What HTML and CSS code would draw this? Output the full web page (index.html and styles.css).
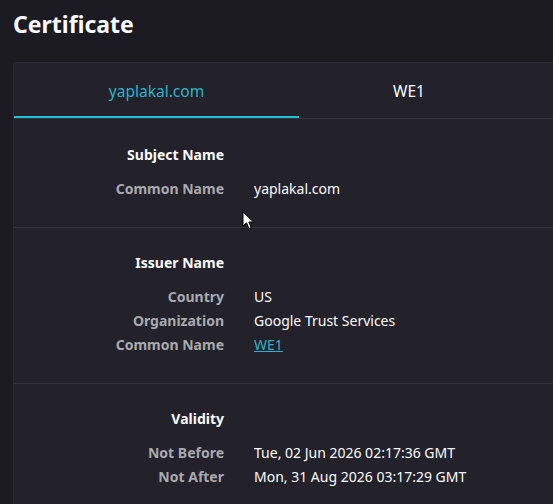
FILE: index.html
```html
<!DOCTYPE html>
<html>
<head>
<meta charset="utf-8">
<link rel="stylesheet" href="styles.css">
</head>
<body>
<h1 class="title">Certificate</h1>
<div class="card">
  <div class="tabs">
    <div class="tab tab-first active">yaplakal.com</div>
    <div class="tab tab-second">WE1</div>
  </div>
  <section class="section">
    <div class="heading">Subject Name</div>
    <div class="rows">
      <div class="label">Common Name</div><div class="value">yaplakal.com</div>
    </div>
  </section>
  <section class="section">
    <div class="heading">Issuer Name</div>
    <div class="rows">
      <div class="label">Country</div><div class="value">US</div>
      <div class="label">Organization</div><div class="value">Google Trust Services</div>
      <div class="label">Common Name</div><div class="value"><a class="link" href="#">WE1</a></div>
    </div>
  </section>
  <section class="section">
    <div class="heading">Validity</div>
    <div class="rows">
      <div class="label">Not Before</div><div class="value">Tue, 02 Jun 2026 02:17:36 GMT</div>
      <div class="label">Not After</div><div class="value">Mon, 31 Aug 2026 03:17:29 GMT</div>
    </div>
  </section>
</div>
<svg class="cursor" width="13" height="19" viewBox="0 0 13 19">
  <path d="M1 1 L1 15 L4.5 11.8 L7 17.5 L9.2 16.5 L6.8 11 L11.5 11 Z" fill="#fff" stroke="#000" stroke-width="1" stroke-linejoin="round"/>
</svg>
</body>
</html>
```
FILE: styles.css
```css
html, body {
  margin: 0;
  padding: 0;
  background: #1c1b22;
  overflow: hidden;
}
body {
  font-family: "Noto Sans", "Open Sans", sans-serif;
  color: #fbfbfe;
  font-size: 14px;
  width: 553px;
  height: 504px;
  position: relative;
}
.title {
  margin: 0;
  padding: 9px 13px 0;
  font-size: 23px;
  font-weight: 700;
  line-height: 30px;
  height: 52px;
  box-sizing: border-box;
}
.card {
  margin-left: 13px;
  width: 560px;
  background: #23222b;
  border: 1px solid #2e2d36;
  border-right: none;
  border-bottom: none;
  border-radius: 4px 0 0 0;
  margin-top: 10px;
  overflow: hidden;
}
.tabs {
  display: flex;
  border-bottom: 1px solid #34333c;
}
.tab {
  height: 55px;
  display: flex;
  align-items: center;
  justify-content: center;
  font-size: 15.5px;
  color: #fbfbfe;
  box-sizing: border-box;
  border-bottom: 2px solid transparent;
  padding-top: 2px;
}
.tab-first {
  width: 285px;
}
.tab-second {
  width: 220px;
}
.tab.active {
  color: #2cb3c8;
  border-bottom-color: #1ec0d6;
}
.section {
  padding: 23px 0 26px;
  border-top: 1px solid #34333c;
}
.section:first-of-type {
  border-top: none;
  padding-top: 24px;
}
.heading {
  width: 210px;
  text-align: right;
  font-weight: 700;
  line-height: 24px;
  margin-bottom: 10px;
}
.rows {
  display: grid;
  grid-template-columns: 210px auto;
  column-gap: 30px;
  line-height: 24px;
}
.label {
  text-align: right;
  font-weight: 700;
  color: #a9a9b0;
}
.value {
  color: #fbfbfe;
}
.link {
  color: #2cb3c8;
  text-decoration: underline;
}
.cursor {
  position: absolute;
  left: 242px;
  top: 211px;
}
```
